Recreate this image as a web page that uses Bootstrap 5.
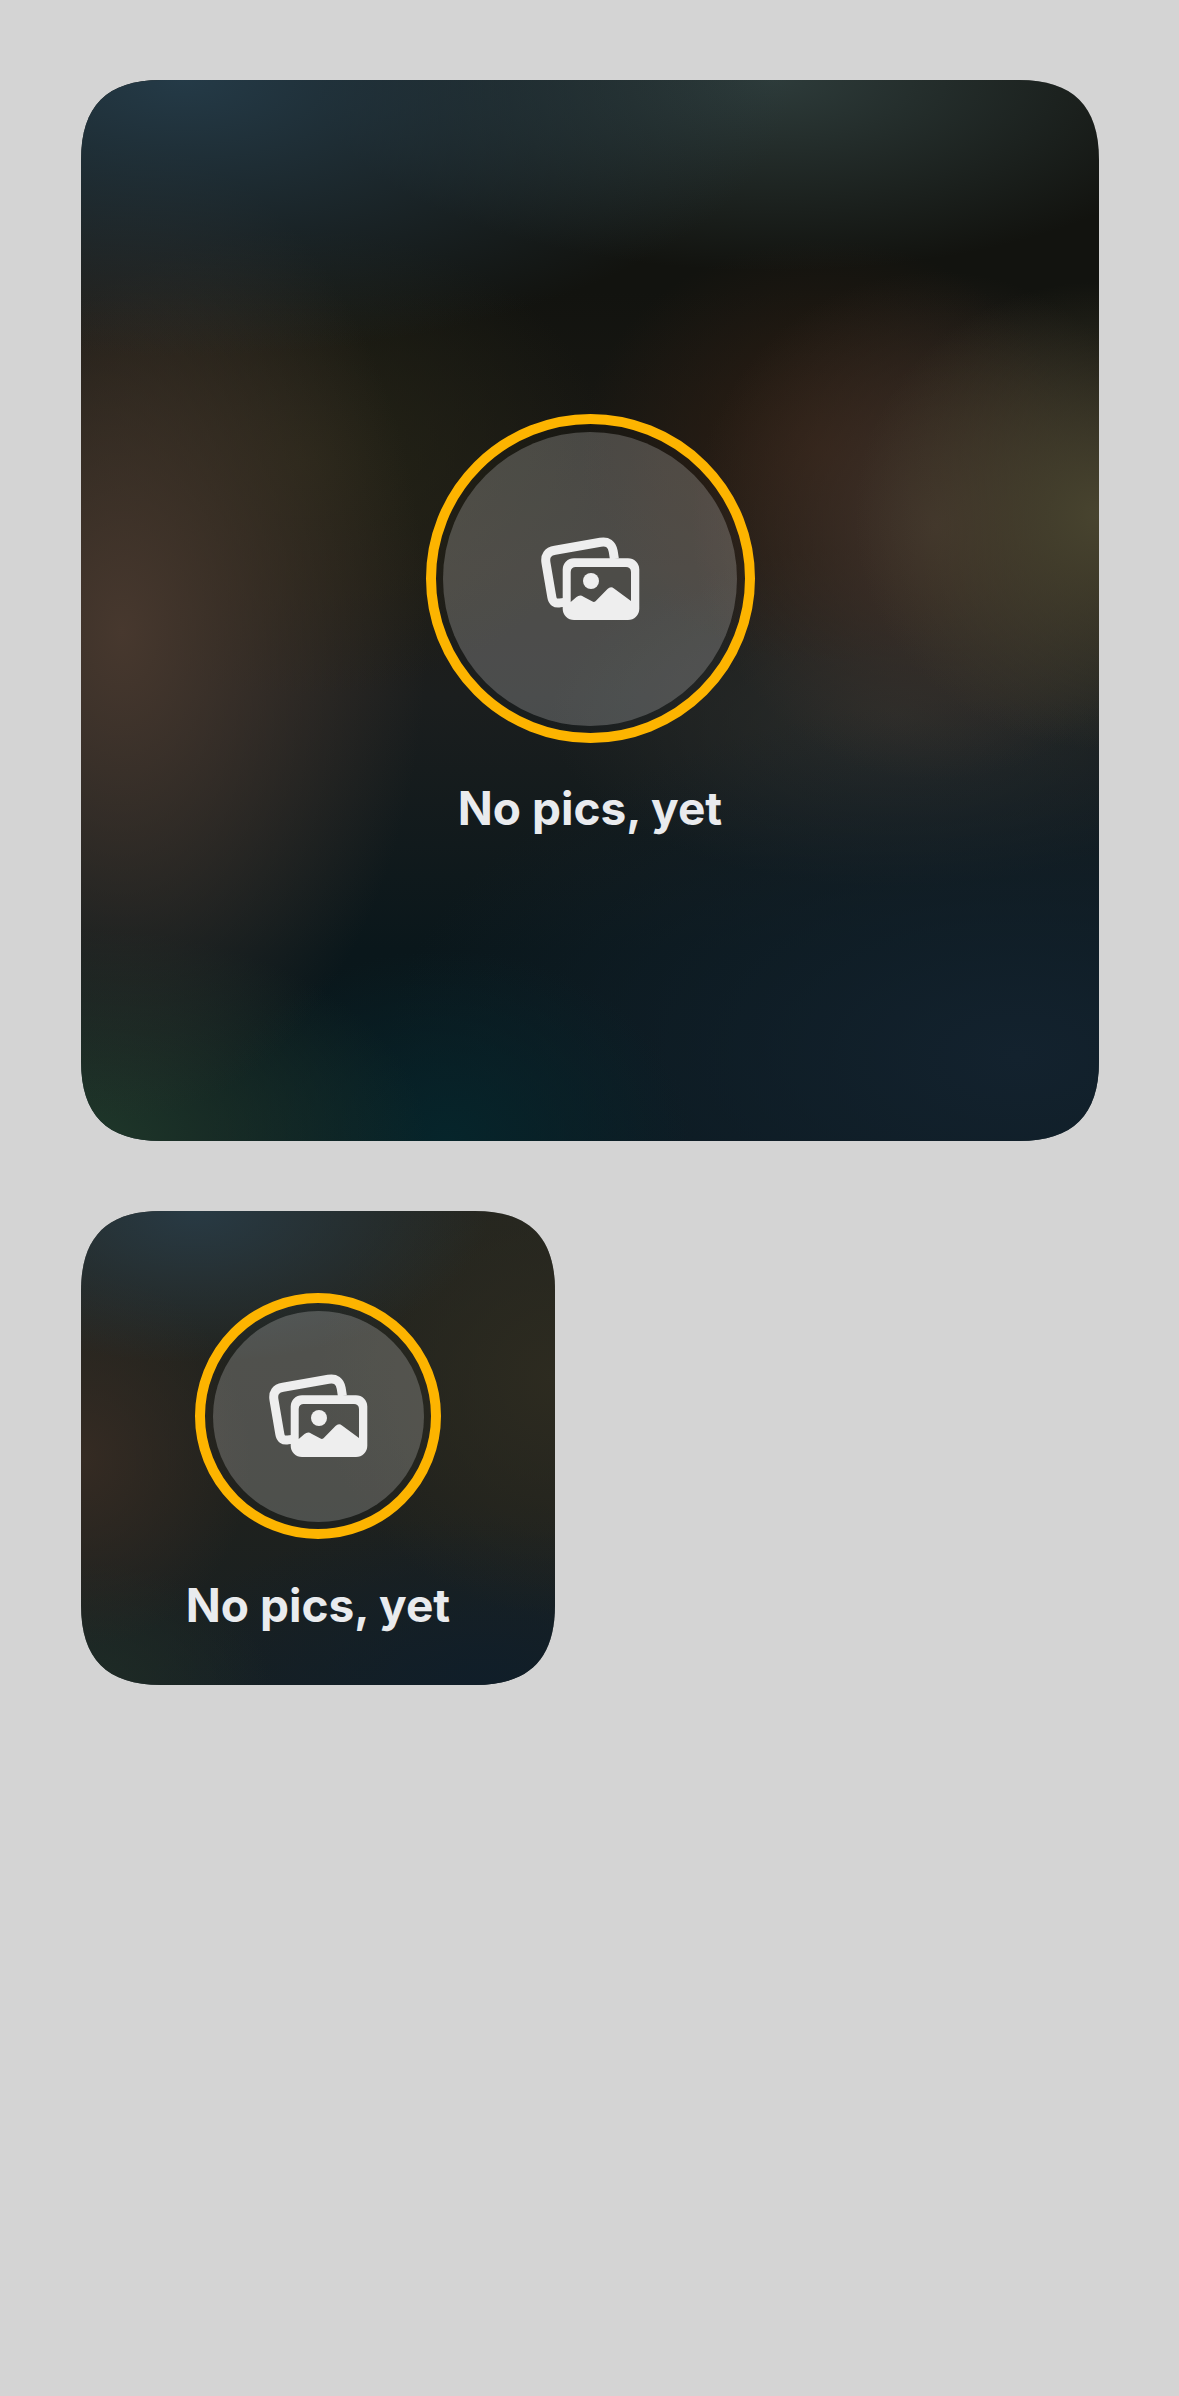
<!DOCTYPE html>
<html lang="en">
<head>
  <meta charset="UTF-8">
  <title>No pics widget</title>
  <link href="https://cdn.jsdelivr.net/npm/bootstrap@5.3.0/dist/css/bootstrap.min.css" rel="stylesheet">
  <style>
    body {
      background-color: #d4d4d4;
      font-family: "Inter", "Liberation Sans", sans-serif;
    }

    .page-wrap {
      padding: 80px 81px;
    }

    .widget-large,
    .widget-small {
      color: #e9ebee;
    }

    .widget-large {
      width: 1018px;
      height: 1061px;
      margin-bottom: 70px;
      padding-top: 334px;
      clip-path: path("M0,80 C0,26 26,0 80,0 L938,0 C992,0 1018,26 1018,80 L1018,981 C1018,1035 992,1061 938,1061 L80,1061 C26,1061 0,1035 0,981 Z");
      background:
        radial-gradient(ellipse 60% 26% at 10% 0%, #243a47, transparent),
        radial-gradient(ellipse 45% 18% at 68% 0%, #2d3b3a, transparent),
        radial-gradient(ellipse 30% 46% at 4% 52%, #47382e, transparent),
        radial-gradient(ellipse 24% 22% at 100% 41%, #48442f, transparent),
        radial-gradient(ellipse 24% 24% at 84% 42%, #40322a, transparent),
        radial-gradient(ellipse 24% 20% at 73% 35%, #2e1e13, transparent),
        radial-gradient(ellipse 30% 22% at 22% 36%, #242316, transparent),
        radial-gradient(ellipse 34% 20% at 0% 100%, #20382a, transparent),
        radial-gradient(ellipse 24% 18% at 36% 100%, #06252b, transparent),
        radial-gradient(ellipse 62% 34% at 92% 92%, #13222e, transparent),
        radial-gradient(ellipse 34% 16% at 80% 60%, #2a2c2a, transparent),
        linear-gradient(#12130f 20%, #1e1c17 46%, #1b1e1e 58%, #0a171b 82%, #0a181e);
    }

    .widget-small {
      width: 474px;
      height: 474px;
      padding-top: 82px;
      clip-path: path("M0,80 C0,26 26,0 80,0 L394,0 C448,0 474,26 474,80 L474,394 C474,448 448,474 394,474 L80,474 C26,474 0,448 0,394 Z");
      background:
        radial-gradient(ellipse 62% 32% at 24% 0%, #283a44, transparent),
        radial-gradient(ellipse 36% 40% at 0% 52%, #352b23, transparent),
        radial-gradient(ellipse 50% 50% at 100% 35%, #2d2b20, transparent),
        radial-gradient(ellipse 40% 26% at 0% 100%, #1f2c26, transparent),
        radial-gradient(ellipse 70% 36% at 85% 100%, #101e29, transparent),
        linear-gradient(#24251f, #1f211d 60%, #172023);
    }

    .ring-large,
    .ring-small {
      border: 10px solid #fdb400;
      padding: 7.5px;
      border-radius: 50%;
    }

    .ring-large {
      width: 329px;
      height: 329px;
    }

    .ring-small {
      width: 246px;
      height: 246px;
    }

    .ring-fill {
      width: 100%;
      height: 100%;
      border-radius: 50%;
      background-color: rgba(255, 255, 255, 0.21);
    }

    .pics-icon {
      width: 100px;
      height: 84px;
    }

    .widget-caption {
      font-size: 46px;
      font-weight: 700;
      line-height: 54px;
      margin-top: 38px;
    }

    .widget-small .widget-caption {
      margin-top: 39px;
    }
  </style>
</head>
<body>
  <div class="page-wrap">
    <div class="widget-large d-flex flex-column align-items-center">
      <div class="ring-large">
        <div class="ring-fill d-flex align-items-center justify-content-center">
          <svg class="pics-icon" viewBox="0 0 100 84">
            <path d="M24,65.4 L20,65.9 Q13,67.2 11.8,60 L6,26 Q4.1,15 15,13.2 L60.4,5.3 Q71.3,3.4 73.2,14.3 L74.4,22" fill="none" stroke="#eeeeee" stroke-width="9"/>
            <path fill-rule="evenodd" fill="#eeeeee" d="M34,21.3 H88 A11.3,11.3 0 0 1 99.3,32.6 V71.7 A11.3,11.3 0 0 1 88,83 H34 A11.3,11.3 0 0 1 22.7,71.7 V32.6 A11.3,11.3 0 0 1 34,21.3 Z M35.7,29.9 A5,5 0 0 0 30.7,34.9 V65 L36.5,60 Q40,57 43.5,59.7 L52.5,64.6 Q54,65.5 55.5,64.2 L67.5,52 Q70.7,49 74,51.5 L91,64 V34.9 A5,5 0 0 0 86,29.9 Z"/>
            <circle cx="51" cy="44" r="8" fill="#eeeeee"/>
          </svg>
        </div>
      </div>
      <div class="widget-caption">No pics, yet</div>
    </div>

    <div class="widget-small d-flex flex-column align-items-center">
      <div class="ring-small">
        <div class="ring-fill d-flex align-items-center justify-content-center">
          <svg class="pics-icon" viewBox="0 0 100 84">
            <path d="M24,65.4 L20,65.9 Q13,67.2 11.8,60 L6,26 Q4.1,15 15,13.2 L60.4,5.3 Q71.3,3.4 73.2,14.3 L74.4,22" fill="none" stroke="#eeeeee" stroke-width="9"/>
            <path fill-rule="evenodd" fill="#eeeeee" d="M34,21.3 H88 A11.3,11.3 0 0 1 99.3,32.6 V71.7 A11.3,11.3 0 0 1 88,83 H34 A11.3,11.3 0 0 1 22.7,71.7 V32.6 A11.3,11.3 0 0 1 34,21.3 Z M35.7,29.9 A5,5 0 0 0 30.7,34.9 V65 L36.5,60 Q40,57 43.5,59.7 L52.5,64.6 Q54,65.5 55.5,64.2 L67.5,52 Q70.7,49 74,51.5 L91,64 V34.9 A5,5 0 0 0 86,29.9 Z"/>
            <circle cx="51" cy="44" r="8" fill="#eeeeee"/>
          </svg>
        </div>
      </div>
      <div class="widget-caption">No pics, yet</div>
    </div>
  </div>

  <script src="https://cdn.jsdelivr.net/npm/bootstrap@5.3.0/dist/js/bootstrap.bundle.min.js"></script>
</body>
</html>
